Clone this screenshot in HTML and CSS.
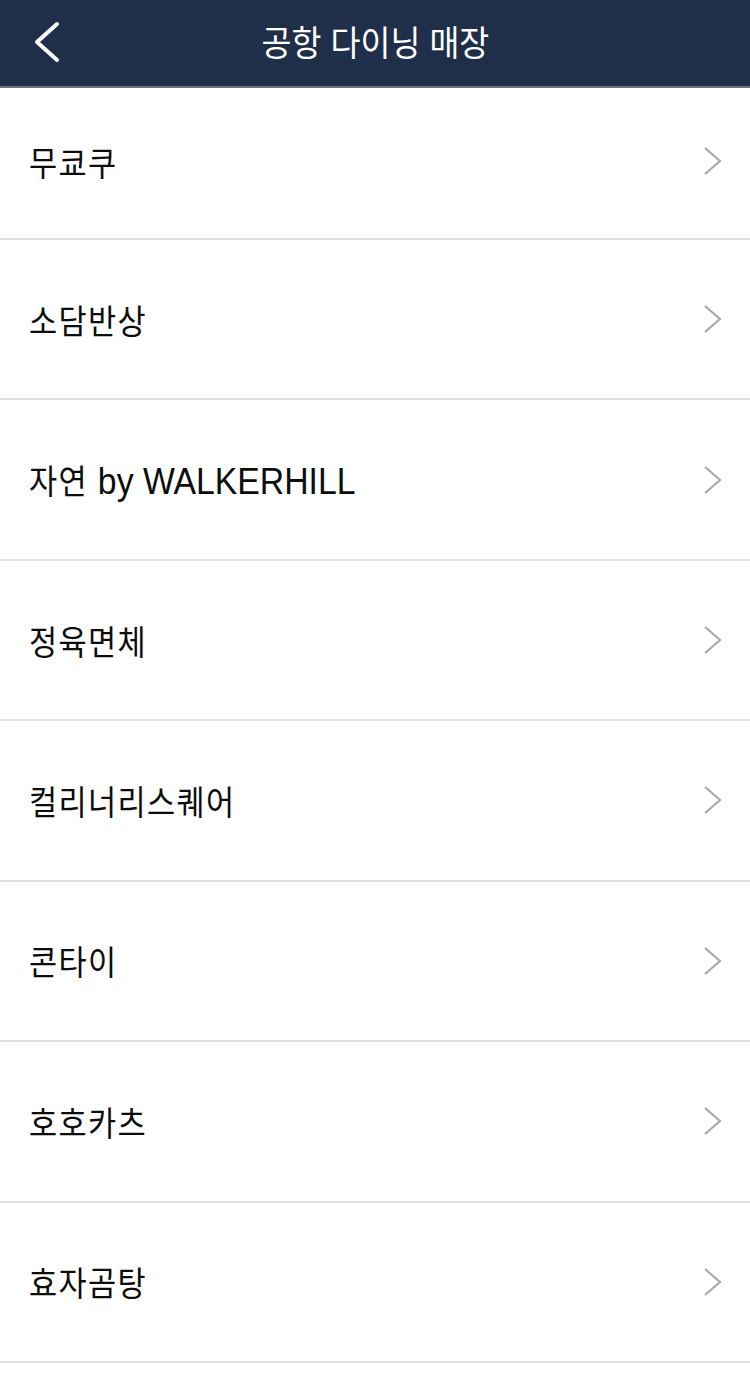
FILE: index.html
```html
<!DOCTYPE html>
<html lang="ko">
<head>
<meta charset="utf-8">
<title>공항 다이닝 매장</title>
<link rel="stylesheet" href="styles.css">
</head>
<body>
<header class="topbar">
  <span class="back">
    <svg width="30" height="44" viewBox="0 0 30 44"><polyline points="25,4 5,22 25,40" fill="none" stroke="#ffffff" stroke-width="4" stroke-linecap="round" stroke-linejoin="round"/></svg>
  </span>
  <h1 class="title">공항 다이닝 매장</h1>
</header>
<ul class="list">
  <li class="item first"><span class="name">무쿄쿠</span><span class="chev"><svg width="24" height="32" viewBox="0 0 24 32"><polyline points="5,3 20,16 5,29" fill="none" stroke="#a9a9a9" stroke-width="2.2"/></svg></span></li>
  <li class="item"><span class="name">소담반상</span><span class="chev"><svg width="24" height="32" viewBox="0 0 24 32"><polyline points="5,3 20,16 5,29" fill="none" stroke="#a9a9a9" stroke-width="2.2"/></svg></span></li>
  <li class="item"><span class="name">자연 <span class="latin">by WALKERHILL</span></span><span class="chev"><svg width="24" height="32" viewBox="0 0 24 32"><polyline points="5,3 20,16 5,29" fill="none" stroke="#a9a9a9" stroke-width="2.2"/></svg></span></li>
  <li class="item"><span class="name">정육면체</span><span class="chev"><svg width="24" height="32" viewBox="0 0 24 32"><polyline points="5,3 20,16 5,29" fill="none" stroke="#a9a9a9" stroke-width="2.2"/></svg></span></li>
  <li class="item"><span class="name">컬리너리스퀘어</span><span class="chev"><svg width="24" height="32" viewBox="0 0 24 32"><polyline points="5,3 20,16 5,29" fill="none" stroke="#a9a9a9" stroke-width="2.2"/></svg></span></li>
  <li class="item"><span class="name">콘타이</span><span class="chev"><svg width="24" height="32" viewBox="0 0 24 32"><polyline points="5,3 20,16 5,29" fill="none" stroke="#a9a9a9" stroke-width="2.2"/></svg></span></li>
  <li class="item"><span class="name">호호카츠</span><span class="chev"><svg width="24" height="32" viewBox="0 0 24 32"><polyline points="5,3 20,16 5,29" fill="none" stroke="#a9a9a9" stroke-width="2.2"/></svg></span></li>
  <li class="item"><span class="name">효자곰탕</span><span class="chev"><svg width="24" height="32" viewBox="0 0 24 32"><polyline points="5,3 20,16 5,29" fill="none" stroke="#a9a9a9" stroke-width="2.2"/></svg></span></li>
</ul>
</body>
</html>
```

FILE: styles.css
```css
* { box-sizing: border-box; }
html, body {
  margin: 0;
  padding: 0;
  background: #ffffff;
  font-family: "Liberation Sans", "Noto Sans CJK KR", sans-serif;
}
body { width: 750px; height: 1379px; overflow: hidden; }

.topbar {
  height: 88px;
  background: #1f2f4a;
  border-bottom: 2px solid #6b7382;
  display: flex;
  align-items: center;
  justify-content: center;
  position: relative;
}
.back {
  position: absolute;
  left: 32px;
  top: 20px;
  display: block;
  line-height: 0;
}
.title {
  margin: 0;
  color: #ffffff;
  font-size: 35px;
  font-weight: normal;
  letter-spacing: 0;
  padding-bottom: 6px;
  transform: scaleX(0.93);
  white-space: nowrap;
}

.list {
  list-style: none;
  margin: 0;
  padding: 0;
}
.item {
  height: 160.43px;
  border-bottom: 2px solid #e1e1e1;
  display: flex;
  align-items: center;
  justify-content: space-between;
  padding: 0 26px 0 29px;
}
.item.first {
  height: 152px;
  padding-bottom: 4px;
}
.name {
  font-size: 34px;
  color: #0d0d0d;
  letter-spacing: 1.5px;
  transform: scaleX(0.9);
  transform-origin: left center;
  white-space: nowrap;
}
.latin {
  font-size: 37.5px;
  letter-spacing: 0;
}
.chev {
  line-height: 0;
  display: block;
}
```
